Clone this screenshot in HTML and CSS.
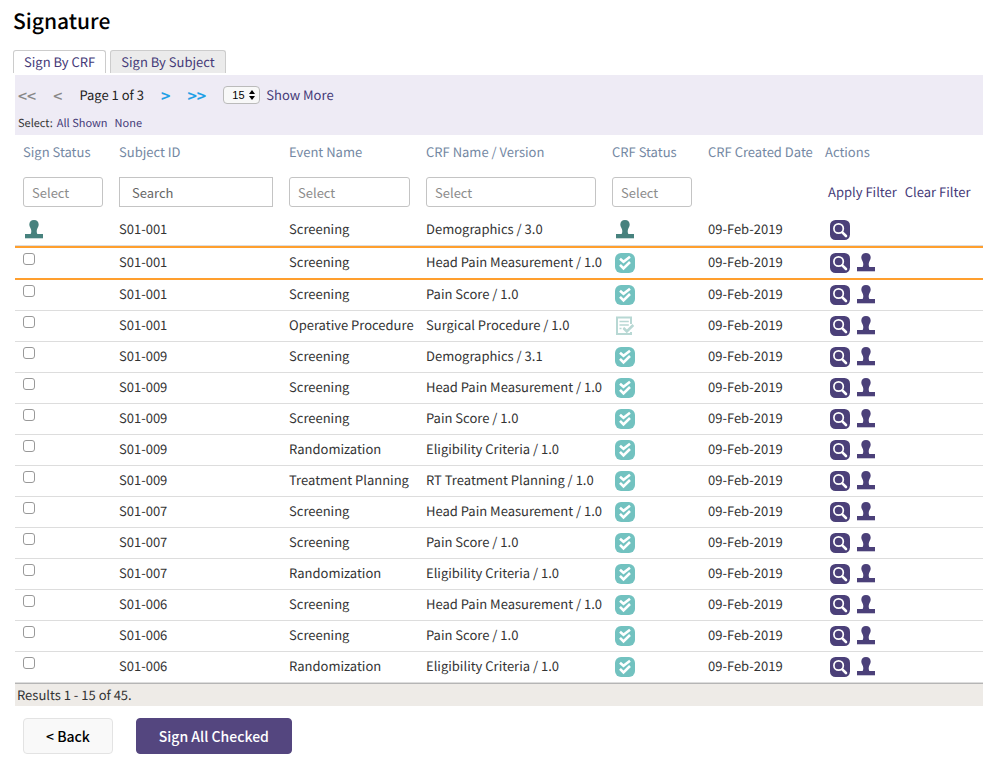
FILE: index.html
```html
<!DOCTYPE html>
<html lang="en">
<head>
    <meta charset="UTF-8">
    <meta name="viewport" content="width=device-width, initial-scale=1.0">
    <title>Signature</title>
    <link rel="stylesheet" href="styles.css">
</head>
<body>
    <!-- icons used in the table -->
    <svg class="icon_defs" width="0" height="0" aria-hidden="true">
        <symbol id="stamp" viewBox="0 0 20 20">
            <path d="M1 14h18v4.300H1z"/>
            <path d="M10 0c3 0 4.700 2 4.700 4.700 0 2.300-2 3.800-2 6.300 0 1.500.3 2.500 1 3.300H6.300c.7-.8 1-1.800 1-3.300 0-2.500-2-4-2-6.300C5.300 2 7 0 10 0z"/>
        </symbol>
        <symbol id="view" viewBox="0 0 20 20">
            <rect x="0" y="0" width="20" height="20" rx="5.500"/>
            <circle cx="8.600" cy="8.500" r="4.700" fill="none" stroke="#fff" stroke-width="1.700"/>
            <path d="M12.300 12.300l3.700 3.700" stroke="#fff" stroke-width="2.600" stroke-linecap="round"/>
        </symbol>
        <symbol id="done" viewBox="0 0 20 20">
            <rect x="0" y="0" width="20" height="20" rx="6"/>
            <path d="M5 5.800l3.500 3L15 3.800M5 11.800l3.500 3.600L15 9" fill="none" stroke="#fff" stroke-width="2.600"/>
        </symbol>
        <symbol id="form" viewBox="0 0 20 20">
            <path d="M16 8V1.500H2v16.500h14V16" fill="none" stroke="currentColor" stroke-width="2"/>
            <path d="M4.500 5.500h9.300M4.500 9h9.300M4.500 12.500h2M8 12.500h1" stroke="currentColor" stroke-width="1.600"/>
            <path d="M8.500 12l3.300 3.400L18.300 9" fill="none" stroke="currentColor" stroke-width="2.600"/>
        </symbol>
    </svg>

    <h1>Signature</h1>
    <div class="tabs">
        <a href="#" class="tab active">Sign By CRF</a>
        <a href="#" class="tab">Sign By Subject</a>
    </div>

    <form class="sign_form" action="#" method="post">
        <div class="toolbar">
            <div class="pager">
                <button type="button" class="arrow" disabled>&lt;&lt;</button>
                <button type="button" class="arrow" disabled>&lt;</button>
                <span>Page 1 of 3</span>
                <button type="button" class="arrow">&gt;</button>
                <button type="button" class="arrow">&gt;&gt;</button>
                <div class="page_size">
                    <select aria-label="Rows per page">
                        <option>15</option>
                        <option>50</option>
                    </select>
                    <svg viewBox="0 0 6 12" aria-hidden="true"><path d="M0 5l3-4 3 4zM0 7l3 4 3-4z"/></svg>
                </div>
                <a href="#" class="show_more">Show More</a>
            </div>
            <div class="pick">
                <span>Select:</span>
                <a href="#">All Shown</a>
                <a href="#">None</a>
            </div>
        </div>

        <table class="crf_table">
            <colgroup>
                <col class="c_sign"><col class="c_subject"><col class="c_event"><col class="c_crf"><col class="c_status"><col class="c_date"><col>
            </colgroup>
            <thead>
                <tr>
                    <th>Sign Status</th>
                    <th>Subject ID</th>
                    <th>Event Name</th>
                    <th>CRF Name / Version</th>
                    <th>CRF Status</th>
                    <th>CRF Created Date</th>
                    <th>Actions</th>
                </tr>
                <tr class="filters">
                    <td><select class="filter" aria-label="Sign Status"><option>Select</option></select></td>
                    <td><input type="text" class="filter search" placeholder="Search" aria-label="Subject ID"></td>
                    <td><select class="filter" aria-label="Event Name"><option>Select</option></select></td>
                    <td><select class="filter" aria-label="CRF Name / Version"><option>Select</option></select></td>
                    <td><select class="filter" aria-label="CRF Status"><option>Select</option></select></td>
                    <td></td>
                    <td><div class="filter_links"><a href="#">Apply Filter</a><a href="#">Clear Filter</a></div></td>
                </tr>
            </thead>
            <tbody>
                <tr>
                    <td><svg class="icon signed"><use href="#stamp"/></svg></td>
                    <td>S01-001</td><td>Screening</td><td>Demographics / 3.0</td>
                    <td class="status"><svg class="icon signed"><use href="#stamp"/></svg></td>
                    <td>09-Feb-2019</td>
                    <td class="actions"><a href="#" aria-label="View"><svg class="icon"><use href="#view"/></svg></a></td>
                </tr>
                <tr class="current">
                    <td><input type="checkbox" aria-label="Sign"></td>
                    <td>S01-001</td><td>Screening</td><td>Head Pain Measurement / 1.0</td>
                    <td class="status"><svg class="icon complete"><use href="#done"/></svg></td>
                    <td>09-Feb-2019</td>
                    <td class="actions"><a href="#" aria-label="View"><svg class="icon"><use href="#view"/></svg></a><a href="#" aria-label="Sign"><svg class="icon"><use href="#stamp"/></svg></a></td>
                </tr>
                <tr>
                    <td><input type="checkbox" aria-label="Sign"></td>
                    <td>S01-001</td><td>Screening</td><td>Pain Score / 1.0</td>
                    <td class="status"><svg class="icon complete"><use href="#done"/></svg></td>
                    <td>09-Feb-2019</td>
                    <td class="actions"><a href="#" aria-label="View"><svg class="icon"><use href="#view"/></svg></a><a href="#" aria-label="Sign"><svg class="icon"><use href="#stamp"/></svg></a></td>
                </tr>
                <tr>
                    <td><input type="checkbox" aria-label="Sign"></td>
                    <td>S01-001</td><td>Operative Procedure</td><td>Surgical Procedure / 1.0</td>
                    <td class="status"><svg class="icon entry"><use href="#form"/></svg></td>
                    <td>09-Feb-2019</td>
                    <td class="actions"><a href="#" aria-label="View"><svg class="icon"><use href="#view"/></svg></a><a href="#" aria-label="Sign"><svg class="icon"><use href="#stamp"/></svg></a></td>
                </tr>
                <tr>
                    <td><input type="checkbox" aria-label="Sign"></td>
                    <td>S01-009</td><td>Screening</td><td>Demographics / 3.1</td>
                    <td class="status"><svg class="icon complete"><use href="#done"/></svg></td>
                    <td>09-Feb-2019</td>
                    <td class="actions"><a href="#" aria-label="View"><svg class="icon"><use href="#view"/></svg></a><a href="#" aria-label="Sign"><svg class="icon"><use href="#stamp"/></svg></a></td>
                </tr>
                <tr>
                    <td><input type="checkbox" aria-label="Sign"></td>
                    <td>S01-009</td><td>Screening</td><td>Head Pain Measurement / 1.0</td>
                    <td class="status"><svg class="icon complete"><use href="#done"/></svg></td>
                    <td>09-Feb-2019</td>
                    <td class="actions"><a href="#" aria-label="View"><svg class="icon"><use href="#view"/></svg></a><a href="#" aria-label="Sign"><svg class="icon"><use href="#stamp"/></svg></a></td>
                </tr>
                <tr>
                    <td><input type="checkbox" aria-label="Sign"></td>
                    <td>S01-009</td><td>Screening</td><td>Pain Score / 1.0</td>
                    <td class="status"><svg class="icon complete"><use href="#done"/></svg></td>
                    <td>09-Feb-2019</td>
                    <td class="actions"><a href="#" aria-label="View"><svg class="icon"><use href="#view"/></svg></a><a href="#" aria-label="Sign"><svg class="icon"><use href="#stamp"/></svg></a></td>
                </tr>
                <tr>
                    <td><input type="checkbox" aria-label="Sign"></td>
                    <td>S01-009</td><td>Randomization</td><td>Eligibility Criteria / 1.0</td>
                    <td class="status"><svg class="icon complete"><use href="#done"/></svg></td>
                    <td>09-Feb-2019</td>
                    <td class="actions"><a href="#" aria-label="View"><svg class="icon"><use href="#view"/></svg></a><a href="#" aria-label="Sign"><svg class="icon"><use href="#stamp"/></svg></a></td>
                </tr>
                <tr>
                    <td><input type="checkbox" aria-label="Sign"></td>
                    <td>S01-009</td><td>Treatment Planning</td><td>RT Treatment Planning / 1.0</td>
                    <td class="status"><svg class="icon complete"><use href="#done"/></svg></td>
                    <td>09-Feb-2019</td>
                    <td class="actions"><a href="#" aria-label="View"><svg class="icon"><use href="#view"/></svg></a><a href="#" aria-label="Sign"><svg class="icon"><use href="#stamp"/></svg></a></td>
                </tr>
                <tr>
                    <td><input type="checkbox" aria-label="Sign"></td>
                    <td>S01-007</td><td>Screening</td><td>Head Pain Measurement / 1.0</td>
                    <td class="status"><svg class="icon complete"><use href="#done"/></svg></td>
                    <td>09-Feb-2019</td>
                    <td class="actions"><a href="#" aria-label="View"><svg class="icon"><use href="#view"/></svg></a><a href="#" aria-label="Sign"><svg class="icon"><use href="#stamp"/></svg></a></td>
                </tr>
                <tr>
                    <td><input type="checkbox" aria-label="Sign"></td>
                    <td>S01-007</td><td>Screening</td><td>Pain Score / 1.0</td>
                    <td class="status"><svg class="icon complete"><use href="#done"/></svg></td>
                    <td>09-Feb-2019</td>
                    <td class="actions"><a href="#" aria-label="View"><svg class="icon"><use href="#view"/></svg></a><a href="#" aria-label="Sign"><svg class="icon"><use href="#stamp"/></svg></a></td>
                </tr>
                <tr>
                    <td><input type="checkbox" aria-label="Sign"></td>
                    <td>S01-007</td><td>Randomization</td><td>Eligibility Criteria / 1.0</td>
                    <td class="status"><svg class="icon complete"><use href="#done"/></svg></td>
                    <td>09-Feb-2019</td>
                    <td class="actions"><a href="#" aria-label="View"><svg class="icon"><use href="#view"/></svg></a><a href="#" aria-label="Sign"><svg class="icon"><use href="#stamp"/></svg></a></td>
                </tr>
                <tr>
                    <td><input type="checkbox" aria-label="Sign"></td>
                    <td>S01-006</td><td>Screening</td><td>Head Pain Measurement / 1.0</td>
                    <td class="status"><svg class="icon complete"><use href="#done"/></svg></td>
                    <td>09-Feb-2019</td>
                    <td class="actions"><a href="#" aria-label="View"><svg class="icon"><use href="#view"/></svg></a><a href="#" aria-label="Sign"><svg class="icon"><use href="#stamp"/></svg></a></td>
                </tr>
                <tr>
                    <td><input type="checkbox" aria-label="Sign"></td>
                    <td>S01-006</td><td>Screening</td><td>Pain Score / 1.0</td>
                    <td class="status"><svg class="icon complete"><use href="#done"/></svg></td>
                    <td>09-Feb-2019</td>
                    <td class="actions"><a href="#" aria-label="View"><svg class="icon"><use href="#view"/></svg></a><a href="#" aria-label="Sign"><svg class="icon"><use href="#stamp"/></svg></a></td>
                </tr>
                <tr>
                    <td><input type="checkbox" aria-label="Sign"></td>
                    <td>S01-006</td><td>Randomization</td><td>Eligibility Criteria / 1.0</td>
                    <td class="status"><svg class="icon complete"><use href="#done"/></svg></td>
                    <td>09-Feb-2019</td>
                    <td class="actions"><a href="#" aria-label="View"><svg class="icon"><use href="#view"/></svg></a><a href="#" aria-label="Sign"><svg class="icon"><use href="#stamp"/></svg></a></td>
                </tr>
            </tbody>
        </table>
        <div class="results">Results 1 - 15 of 45.</div>

        <div class="buttons">
            <button type="button" class="btn">&lt; Back</button>
            <button type="submit" class="btn primary">Sign All Checked</button>
        </div>
    </form>
</body>
</html>
```
FILE: styles.css
```css
*{
    box-sizing:border-box;
}
body{
    margin:0;
    padding:8px 20px 15px 13px;
    background:#fff;
    color:#333;
    font-family:"Noto Sans CJK SC", "Open Sans", sans-serif;
    font-size:13px;
    font-weight:400;
    line-height:20px;
    text-rendering:geometricPrecision;
}
button, input, select{
    font:inherit;
}
a{
    color:#453a78;
    text-decoration:none;
}
.icon_defs{
    position:absolute;
}
h1{
    margin:0 0 16px;
    color:#000;
    font-size:21px;
    font-weight:500;
    line-height:26px;
}

/* tabs */
.tabs{
    display:flex;
    gap:4px;
    margin-bottom:2px;
}
.tab{
    height:23px;
    padding:1px 10px 0;
    border:1px solid #ccc;
    border-bottom:0;
    border-radius:3px 3px 0 0;
    background:#ebebeb;
}
.tab.active{
    background:#fff;
}
.sign_form{
    margin-left:2px;
}

/* pager */
.toolbar{
    height:60px;
    padding:10px 3px 0;
    background:#eeebf5;
}
.pager{
    display:flex;
    align-items:center;
    gap:17px;
    color:#222;
}
.arrow{
    padding:0;
    border:0;
    background:none;
    color:#1f9fe5;
    font-size:16px;
    font-weight:700;
}
.arrow:disabled{
    color:#888;
    font-weight:500;
}
.page_size{
    position:relative;
    display:flex;
}
.page_size select{
    width:37px;
    height:18px;
    padding:0 0 0 8px;
    appearance:none;
    border:1px solid #bbb;
    border-radius:4px;
    background:#f8f8f8;
    color:#000;
    font-family:"Liberation Sans", sans-serif;
    font-size:11px;
    font-weight:400;
    line-height:16px;
}
.page_size svg{
    position:absolute;
    top:3px;
    right:5px;
    width:6px;
    height:12px;
}
.show_more{
    margin-left:-11px;
}
.pick{
    display:flex;
    gap:7px;
    margin-top:8px;
    font-size:11px;
}
.pick span{
    margin-right:-3px;
}

/* table */
.crf_table{
    width:100%;
    table-layout:fixed;
    border-collapse:separate;
    border-spacing:0;
}
.c_sign, .c_status{
    width:96px;
}
.c_subject{
    width:170px;
}
.c_event{
    width:137px;
}
.c_crf{
    width:186px;
}
.c_date{
    width:117px;
}
.crf_table th{
    padding:7px 8px;
    color:#7488a3;
    font-weight:400;
    text-align:left;
    white-space:nowrap;
}
.crf_table td{
    height:31px;
    padding:5px 8px;
    border-bottom:1px solid #ddd;
    line-height:18px;
    vertical-align:top;
    white-space:nowrap;
}
.crf_table .filters td{
    padding:8px;
    border:0;
}
.crf_table .current td{
    height:34px;
    border-top:2px solid #ff9f2e;
    border-bottom:2px solid #ff9f2e;
}
.filter{
    display:block;
    width:100%;
    height:30px;
    padding:2px 8px 0;
    appearance:none;
    border:1px solid #c4c4c4;
    border-radius:3px;
    background:#fff;
    color:#8c8c8c;
}
.search{
    padding:0 12px;
    border-radius:0;
}
.search::placeholder{
    color:#666;
}
.filter_links{
    display:flex;
    gap:8px;
    padding:6px 3px;
}
.crf_table input[type="checkbox"]{
    display:block;
    width:12px;
    height:12px;
    margin:0;
    appearance:none;
    border:1px solid #999;
    border-radius:3px;
    background:#fff;
}
.crf_table input[type="checkbox"]:checked{
    background:#4f4480;
}
.icon{
    display:block;
    width:20px;
    height:20px;
    margin-left:1px;
    fill:#4b4079;
}
.icon.signed{
    fill:#47827e;
}
.icon.complete{
    fill:#72c2c0;
}
.icon.entry{
    color:#b8d8d4;
}
.status .icon{
    margin-left:3px;
}
.crf_table .actions{
    padding-left:12px;
}
.actions a{
    display:inline-block;
    margin-right:5px;
    vertical-align:top;
}

.results{
    padding:1px 2px;
    border-top:1px solid #b5b5b5;
    background:#eeebe7;
}

/* bottom buttons */
.buttons{
    display:flex;
    gap:23px;
    margin-top:12px;
    padding-left:8px;
}
.btn{
    height:36px;
    padding:0 22px;
    border:1px solid #e3e3e3;
    border-radius:4px;
    background:#f9f9f9;
    color:#000;
    font-size:14px;
    font-weight:500;
}
.btn.primary{
    border-color:#54467f;
    background:#54467f;
    color:#fff;
}
```
